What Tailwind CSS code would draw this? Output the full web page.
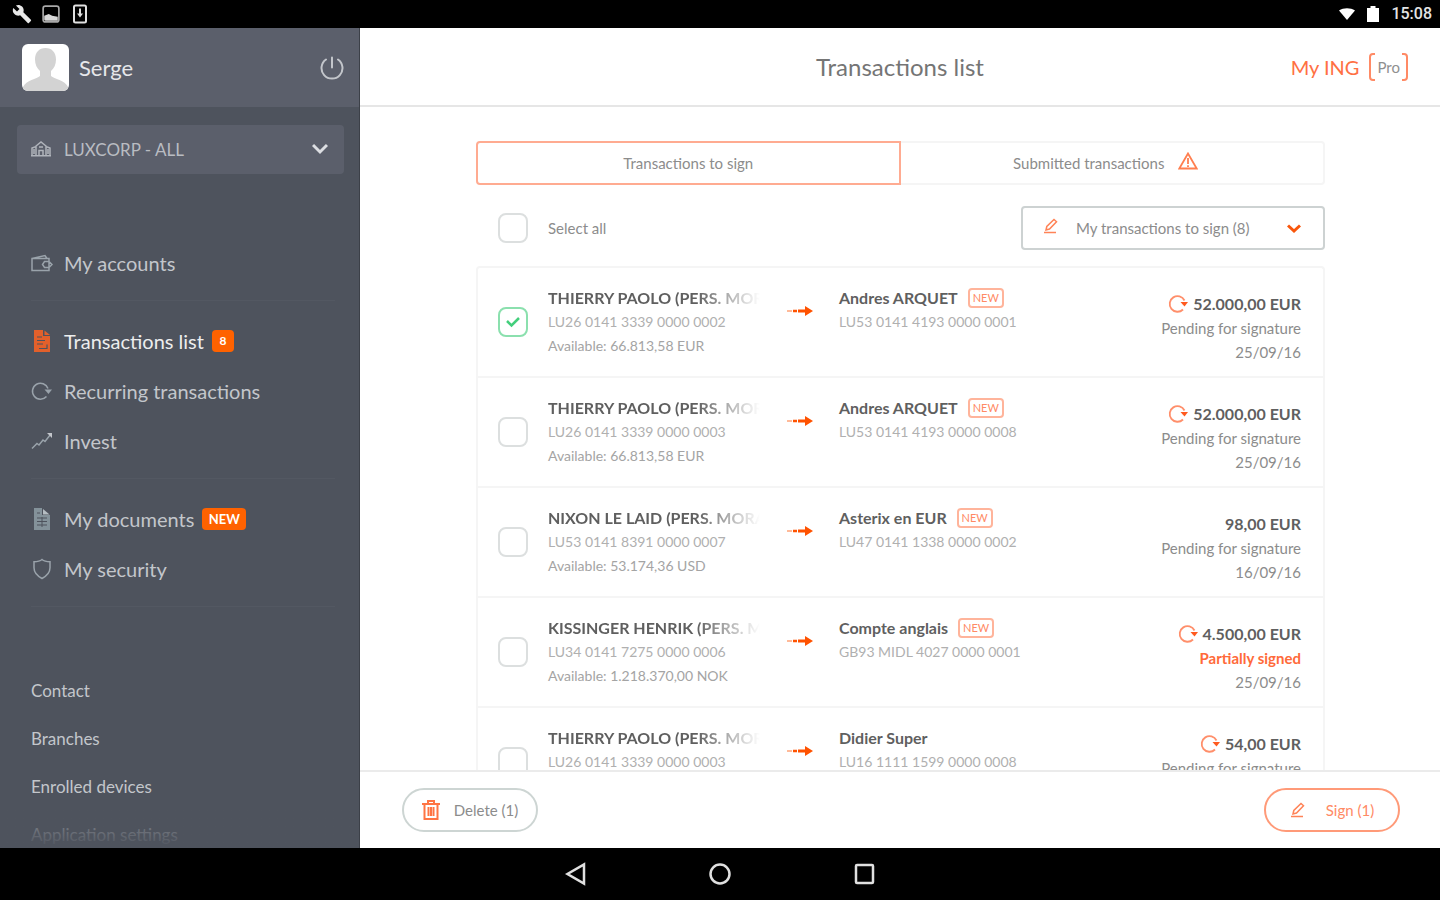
<!DOCTYPE html>
<html lang="en">
<head>
    <meta charset="UTF-8">
    <meta name="viewport" content="width=device-width, initial-scale=1.0">
    <title>Transactions list - My ING Pro</title>
    <script src="https://cdn.jsdelivr.net/npm/@tailwindcss/browser@4"></script>
</head>
<body class="h-screen flex flex-col overflow-hidden bg-white font-['Lato','Open_Sans',sans-serif]">
    <!-- Status bar -->
    <div class="h-7 shrink-0 bg-black flex items-center justify-between pl-3 pr-2 text-white">
        <div class="flex items-center gap-[10px]">
            <svg class="w-5 h-5" viewBox="0 0 24 24" fill="#e8e8e8"><path d="M22.7 19l-9.1-9.1c.9-2.3.4-5-1.5-6.9-2-2-5-2.4-7.4-1.3L9 6 6 9 1.600 4.700C.4 7.100.9 10.100 2.900 12.100c1.900 1.900 4.600 2.400 6.900 1.500l9.100 9.100c.4.4 1 .4 1.400 0l2.300-2.300c.5-.4.5-1.100.1-1.400z"/></svg>
            <svg class="w-[18px] h-[18px]" viewBox="0 0 16 16" fill="none" stroke="#a8a8a8" stroke-width="1.500"><rect x="1" y="1" width="14" height="14" rx="2"/><path d="M2 13V9.500L6 8l3 1.500 5 1V14H3z" fill="#d8d8d8" stroke="none"/></svg>
            <svg class="w-4 h-5 ml-[2px]" viewBox="0 0 16 20" fill="none" stroke="#e0e0e0"><rect x="2" y="1.500" width="12" height="17" rx="1.500" stroke-width="2"/><path d="M8 4.500v7" stroke-width="2"/><path d="M5 9.500h6l-3 4z" fill="#e0e0e0" stroke="none"/></svg>
        </div>
        <div class="flex items-center gap-2">
            <svg class="w-4 h-3" viewBox="0 0 16 12" fill="#fff"><path d="M8 12L0 2.500C4.500-.6 11.500-.6 16 2.500z"/></svg>
            <svg class="w-3 h-4 ml-1" viewBox="0 0 12 16" fill="#fff"><path d="M3.500 0h5v2H12v14H0V2h3.500z"/></svg>
            <span class="text-base leading-5 font-['Roboto',sans-serif] font-medium ml-1 text-[#e4e4e4]">15:08</span>
        </div>
    </div>

    <div class="flex flex-1 min-h-0">
        <!-- Sidebar -->
        <aside class="relative w-1/4 shrink-0 flex flex-col overflow-hidden bg-[#4e535d] border-r border-[#3c4048] text-[#c3c6cb]">
            <div class="h-[79px] shrink-0 flex items-center bg-[#5b5f6b] pl-[22px] pr-[15px]">
                <svg class="w-[47px] h-[47px] rounded-md bg-white" viewBox="0 0 47 47" fill="#d3d3d3"><path d="M23.500 4c6.500 0 10.500 4.500 10.500 11.500 0 5-2 9-5 11.500v5c3 3 14 4 17 11v4H1v-4c3-7 14-8 17-11v-5c-3-2.500-5-6.500-5-11.500C13 8.500 17 4 23.500 4z"/></svg>
                <span class="ml-[10px] text-[22px] leading-7 text-[#e6e7ea]">Serge</span>
                <button type="button" aria-label="Log out" class="ml-auto">
                    <svg class="w-6 h-6" viewBox="0 0 24 24" fill="none" stroke="#c3c6cb" stroke-width="2" stroke-linecap="round"><path d="M6 3.500a10.500 10.500 0 1 0 12 0M12 1.500v10"/></svg>
                </button>
            </div>

            <div class="relative ml-[17px] mr-[15px] mt-[18px] shrink-0">
                <select aria-label="Company" class="w-full h-[49px] appearance-none rounded bg-[#5b5f6b] pl-[47px] text-[17px] text-[#b9bcc2]">
                    <option>LUXCORP - ALL</option>
                </select>
                <svg class="absolute left-[14px] top-4 w-5 h-4 pointer-events-none" viewBox="0 0 20 16" fill="none" stroke="#b0b4bb" stroke-width="1.500"><path d="M1 14.500V7l4-1.500v9M15 14.500v-9L19 7v7.500M5 14.500V5l5-4 5 4v9.500M0 14.700h20M8 14V9.500h4V14M8 6h4M3 8v5M17 8v5"/></svg>
                <svg class="absolute right-4 top-[18px] w-4 h-3 pointer-events-none" viewBox="0 0 16 12" fill="none" stroke="#dcdee2" stroke-width="3"><path d="M1 2l7 7 7-7"/></svg>
            </div>

            <nav class="mt-16 shrink-0 text-xl leading-6">
                <div class="ml-[31px] mr-6 pb-3 border-b border-[#535862]">
                    <a href="#" class="h-[50px] flex items-center gap-[11px]">
                        <svg class="w-[22px] h-[18px]" viewBox="0 0 22 18" fill="none" stroke="#9aa3ab" stroke-width="1.500"><path d="M1 4.500h17v12H1zM1 4.500L14 1.500l2 3M18 7.500h-4.500l-2 3 2 3H18l3-3z"/></svg>
                        My accounts
                    </a>
                </div>
                <div class="ml-[31px] mr-6 pt-[15px] pb-3 border-b border-[#535862]">
                    <a href="#" class="h-[50px] flex items-center gap-[11px] text-[#eceded]">
                        <svg class="w-[22px] h-[22px]" viewBox="0 0 22 22" fill="#e2602b"><path d="M3 0h9v6h7v16H3z" /><path d="M13.500.5L19 5h-5.500z"/><path d="M6 7h5M6 10.500h8M6 14h6M8 18.500h8v-4" stroke="#4e535d" stroke-width="1.200" fill="none"/></svg>
                        Transactions list
                        <span class="-ml-[3px] w-[22px] h-[22px] flex items-center justify-center rounded bg-[#ff6200] text-xs font-bold text-white">8</span>
                    </a>
                    <a href="#" class="h-[50px] flex items-center gap-[11px]">
                        <svg class="w-[22px] h-5" viewBox="0 0 22 20" fill="none" stroke="#9aa3ab" stroke-width="1.500"><path d="M17 7.500A8 8 0 1 0 15.500 15.500"/><path d="M13.500 8.500H21L17.500 13z" fill="#9aa3ab" stroke="none"/></svg>
                        Recurring transactions
                    </a>
                    <a href="#" class="h-[50px] flex items-center gap-[11px]">
                        <svg class="w-[22px] h-[18px]" viewBox="0 0 22 18" fill="none" stroke="#9aa3ab" stroke-width="1.500"><path d="M1 16.500l5-5 2 1.500 4-5 2 1.500 5.500-7"/><path d="M16 1h5v5z" fill="#c3c6cb" stroke="none"/></svg>
                        Invest
                    </a>
                </div>
                <div class="ml-[31px] mr-6 pt-[15px] pb-3 border-b border-[#535862]">
                    <a href="#" class="h-[50px] flex items-center gap-[11px]">
                        <svg class="w-[22px] h-[22px]" viewBox="0 0 22 22" fill="#84929a"><path d="M3 0h8v7h8v15H3z"/><path d="M12 1l6.500 5.500H12z" fill="#b5bdc2"/><path d="M6 5h3M6 10h10M6 13.500h10M6 17h10M11 9v10" stroke="#4e535d" fill="none"/></svg>
                        My documents
                        <span class="-ml-[3px] w-11 h-[22px] flex items-center justify-center rounded bg-[#ff6200] text-[13px] font-bold text-white">NEW</span>
                    </a>
                    <a href="#" class="h-[50px] flex items-center gap-[11px]">
                        <svg class="w-[22px] h-[22px]" viewBox="0 0 22 22" fill="none" stroke="#9aa3ab" stroke-width="1.500"><path d="M11 1.500c2 1.800 4.500 2.300 8 2.300v6c0 5-3 8-8 10.700-5-2.700-8-5.700-8-10.700v-6c3.500 0 6-.5 8-2.300z"/></svg>
                        My security
                    </a>
                </div>
            </nav>

            <div class="mt-[60px] ml-[31px] shrink-0 text-[17px]">
                <a href="#" class="h-12 flex items-center">Contact</a>
                <a href="#" class="h-12 flex items-center">Branches</a>
                <a href="#" class="h-12 flex items-center">Enrolled devices</a>
                <a href="#" class="h-12 flex items-center">Application settings</a>
            </div>
            <div class="absolute inset-x-0 bottom-0 h-10 bg-linear-to-b from-[#4e535d]/40 to-[#4e535d] pointer-events-none"></div>
        </aside>

        <!-- Content -->
        <main class="flex-1 min-w-0 flex flex-col">
            <header class="h-[79px] shrink-0 grid grid-cols-[1fr_auto_1fr] items-center border-b-2 border-[#e6e6e6] px-8">
                <h1 class="col-start-2 text-2xl text-[#757575]">Transactions list</h1>
                <div class="justify-self-end flex items-center text-xl leading-7 text-[#ff7043]">
                    My ING
                    <svg class="ml-[10px] w-[6px] h-7" viewBox="0 0 6 28" fill="none" stroke="#ff8a65" stroke-width="2"><path d="M6 1H4Q1 1 1 4v20q0 3 3 3h2"/></svg>
                    <span class="px-[2px] text-[15px] text-[#8f8f8f]">Pro</span>
                    <svg class="w-[6px] h-7" viewBox="0 0 6 28" fill="none" stroke="#ff8a65" stroke-width="2"><path d="M0 1h2q3 0 3 3v20q0 3-3 3H0"/></svg>
                </div>
            </header>

            <div class="flex-1 min-h-0 overflow-hidden pl-[116px] pr-[115px] pt-[34px]">
                <!-- Tabs -->
                <div class="grid grid-cols-2 h-11 text-[15px] text-[#8c8c8c]" role="tablist">
                    <button type="button" role="tab" aria-selected="true" class="rounded-l border-2 border-[#ffab91]">Transactions to sign</button>
                    <button type="button" role="tab" aria-selected="false" class="flex items-center justify-center gap-[14px] rounded-r border-2 border-l-0 border-[#f5f5f5] pr-3">
                        Submitted transactions
                        <svg class="w-5 h-[18px] mb-1" viewBox="0 0 20 18" fill="none" stroke="#ff7f50" stroke-width="1.800"><path d="M10 1.500L1.300 16.500h17.400z"/><path d="M10 6v6M10 13.200v1.800"/></svg>
                    </button>
                </div>

                <div class="mt-[21px] h-11 flex items-center pl-[22px]">
                    <label class="flex items-center gap-5 text-[15px] text-[#8c8c8c]">
                        <input type="checkbox" class="appearance-none w-[30px] h-[30px] rounded-lg border-2 border-[#dcdfdf]">
                        Select all
                    </label>
                    <div class="relative ml-auto">
                        <select aria-label="Filter" class="w-[304px] h-11 appearance-none rounded border-2 border-[#cdd2d2] pl-[53px] text-[15px] text-[#8c8c8c]">
                            <option>My transactions to sign (8)</option>
                        </select>
                        <svg class="absolute left-[22px] top-3 w-4 h-4 pointer-events-none" viewBox="0 0 16 16" fill="none" stroke="#ff8357" stroke-width="1.500"><path d="M3 12l.8-3.500L11 1.500l2.500 2.300L6.500 11 3 12zM1 14.500h12"/></svg>
                        <svg class="absolute right-6 top-[18px] w-[14px] h-[10px] pointer-events-none" viewBox="0 0 14 10" fill="none" stroke="#f9560b" stroke-width="3"><path d="M1 1.500l6 5.500 6-5.500"/></svg>
                    </div>
                </div>

                <!-- Transactions -->
                <ul id="transactions" class="mt-4 border-2 border-b-0 border-[#f5f5f5] rounded-t"></ul>
            </div>

            <footer class="shrink-0 flex items-center justify-between border-t-2 border-[#ebebeb] bg-white pl-[42px] pr-10 py-4">
                <button type="button" class="w-[136px] h-11 flex items-center justify-center gap-[14px] rounded-full border-2 border-[#cdd5d3] text-[15px] text-[#8c8c8c]">
                    <svg class="w-[18px] h-5" viewBox="0 0 18 20" fill="none" stroke="#ff7443" stroke-width="2"><path d="M0 4h18M6 3V1h6v2M2.500 5v14h13V5M6.500 7v9M9 7v9M11.500 7v9"/></svg>
                    Delete (1)
                </button>
                <button type="button" class="w-[136px] h-11 flex items-center justify-center gap-5 rounded-full border-2 border-[#ff9a78] text-[15px] text-[#ff8a65]">
                    <svg class="w-4 h-4" viewBox="0 0 16 16" fill="none" stroke="#ff8357" stroke-width="1.500"><path d="M3 12l.8-3.500L11 1.500l2.500 2.300L6.500 11 3 12zM1 14.500h12"/></svg>
                    Sign (1)
                </button>
            </footer>
        </main>
    </div>

    <!-- Navigation bar -->
    <div class="h-[52px] shrink-0 bg-black flex items-center justify-center gap-[120px]">
        <button type="button" aria-label="Back"><svg class="w-6 h-6" viewBox="0 0 24 24" fill="none" stroke="#e0e0e0" stroke-width="2.500"><path d="M20 2.500v19L3.500 12z"/></svg></button>
        <button type="button" aria-label="Home"><svg class="w-6 h-6" viewBox="0 0 24 24" fill="none" stroke="#e0e0e0" stroke-width="2.500"><circle cx="12" cy="12" r="9.500"/></svg></button>
        <button type="button" aria-label="Recent apps"><svg class="w-6 h-6" viewBox="0 0 24 24" fill="none" stroke="#e0e0e0" stroke-width="2.500"><rect x="4" y="3" width="17" height="18" rx="1"/></svg></button>
    </div>

    <script>
        const transactions = [
            { from: 'THIERRY PAOLO (PERS. MOR', iban: 'LU26 0141 3339 0000 0002', available: '66.813,58 EUR', to: 'Andres ARQUET', toIban: 'LU53 0141 4193 0000 0001', isNew: true, recurring: true, amount: '52.000,00 EUR', status: 'Pending for signature', date: '25/09/16', checked: true },
            { from: 'THIERRY PAOLO (PERS. MOR', iban: 'LU26 0141 3339 0000 0003', available: '66.813,58 EUR', to: 'Andres ARQUET', toIban: 'LU53 0141 4193 0000 0008', isNew: true, recurring: true, amount: '52.000,00 EUR', status: 'Pending for signature', date: '25/09/16' },
            { from: 'NIXON LE LAID (PERS. MORA', iban: 'LU53 0141 8391 0000 0007', available: '53.174,36 USD', to: 'Asterix en EUR', toIban: 'LU47 0141 1338 0000 0002', isNew: true, amount: '98,00 EUR', status: 'Pending for signature', date: '16/09/16' },
            { from: 'KISSINGER HENRIK (PERS. M', iban: 'LU34 0141 7275 0000 0006', available: '1.218.370,00 NOK', to: 'Compte anglais', toIban: 'GB93 MIDL 4027 0000 0001', isNew: true, recurring: true, amount: '4.500,00 EUR', status: 'Partially signed', partial: true, date: '25/09/16' },
            { from: 'THIERRY PAOLO (PERS. MOR', iban: 'LU26 0141 3339 0000 0003', available: '66.813,58 EUR', to: 'Didier Super', toIban: 'LU16 1111 1599 0000 0008', recurring: true, amount: '54,00 EUR', status: 'Pending for signature', date: '25/09/16' }
        ];

        const newBadge = '<span class="ml-[10px] w-9 h-5 inline-flex items-center justify-center rounded border-2 border-[#ffb49b] text-[11px] font-normal text-[#ff8a65]">NEW</span>';
        const recurringIcon = '<svg class="w-5 h-5" viewBox="0 0 20 20" fill="none" stroke="#ff8f6b" stroke-width="1.800"><path d="M16.500 6.500A7.800 7.800 0 1 0 15 15.500"/><path d="M12.500 8H20l-3.500 4.500z" fill="#ff5a1f" stroke="none"/></svg>';

        document.getElementById('transactions').innerHTML = transactions.map((t, i) => `
            <li class="h-[110px] grid grid-cols-[50px_minmax(0,212px)_79px_minmax(0,1fr)_auto] pl-5 pr-[22px] border-b-2 border-[#f5f5f5] text-sm leading-6 text-[#b0b0b0]">
                <span class="relative self-center w-[30px] h-[30px]">
                    <input type="checkbox" id="t${i}" ${t.checked ? 'checked' : ''} class="peer block appearance-none w-[30px] h-[30px] rounded-lg border-2 border-[#dcdfdf] checked:border-[#8be0ae]">
                    <svg class="absolute inset-2 w-[14px] h-[14px] hidden peer-checked:block pointer-events-none" viewBox="0 0 14 14" fill="none" stroke="#43cf7c" stroke-width="2.500"><path d="M1 6l4.500 4.500L13 3"/></svg>
                </span>
                <div class="pt-[18px] whitespace-nowrap">
                    <label for="t${i}" class="block text-base leading-6 font-bold text-[#5f5f5f] [mask-image:linear-gradient(to_right,black_70%,transparent)]">${t.from}</label>
                    <p class="text-[#b0b0b0]">${t.iban}</p>
                    <p class="text-[#a4a4a4]">Available: ${t.available}</p>
                </div>
                <svg class="mt-[37px] w-[26px] h-3 justify-self-center" viewBox="0 0 26 12" fill="#ff5200"><path d="M0 5h5v2H0z" opacity=".4"/><path d="M6 4.800h4v2.400H6zM11 4.500h7V1l8 5-8 5V7.500h-7z"/></svg>
                <div class="pt-[18px] whitespace-nowrap">
                    <p class="flex items-center text-base leading-6 font-bold text-[#5f5f5f]">${t.to}${t.isNew ? newBadge : ''}</p>
                    <p>${t.toIban}</p>
                </div>
                <div class="pt-6 text-right text-[15px] text-[#8c8c8c]">
                    <p class="flex items-center justify-end gap-[5px] text-base leading-6 font-bold text-[#5f5f5f]">${t.recurring ? recurringIcon : ''}${t.amount}</p>
                    <p class="${t.partial ? 'font-bold text-[#ff6a3a]' : ''}">${t.status}</p>
                    <p>${t.date}</p>
                </div>
            </li>`).join('');
    </script>
</body>
</html>
